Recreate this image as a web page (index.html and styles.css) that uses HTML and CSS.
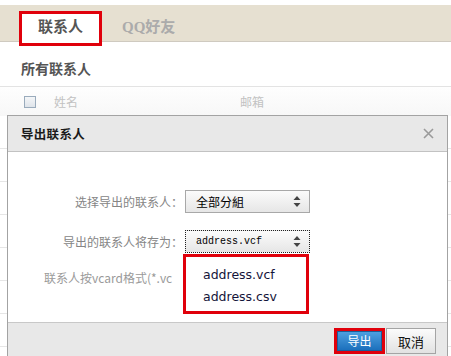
FILE: index.html
```html
<!DOCTYPE html>
<html lang="zh">
<head>
<meta charset="utf-8">
<title>导出联系人</title>
<link rel="stylesheet" href="styles.css">
</head>
<body>
<div class="page">
  <div class="tabbar">
    <div class="tab tab-active">联系人</div>
    <div class="tab tab-other">QQ好友</div>
  </div>
  <div class="list-title">所有联系人</div>
  <div class="thead">
    <span class="checkbox"></span>
    <span class="col-name">姓名</span>
    <span class="col-mail">邮箱</span>
  </div>
  <div class="row"></div>
  <div class="row"></div>
  <div class="row"></div>
  <div class="row"></div>
  <div class="row"></div>
  <div class="row"></div>
  <div class="row"></div>

  <div class="dialog">
    <div class="dialog-head">
      <span class="dialog-title">导出联系人</span>
      <svg class="close" width="11" height="11" viewBox="0 0 11 11"><path d="M1 1L10 10M10 1L1 10" stroke="#9a9a9a" stroke-width="1.6" fill="none"/></svg>
    </div>
    <div class="dialog-body">
      <div class="form">
        <label class="label">选择导出的联系人：</label>
        <div class="select">
          <span>全部分組</span>
          <svg class="arrows" width="8" height="11" viewBox="0 0 8 11"><path d="M4 0L7.5 4H0.5Z M4 11L7.5 7H0.5Z" fill="#444"/></svg>
        </div>
        <label class="label">导出的联系人将存为：</label>
        <div class="select select-focus">
          <span class="mono">address.vcf</span>
          <svg class="arrows" width="8" height="11" viewBox="0 0 8 11"><path d="M4 0L7.5 4H0.5Z M4 11L7.5 7H0.5Z" fill="#444"/></svg>
          <div class="dropdown">
            <div class="option">address.vcf</div>
            <div class="option">address.csv</div>
          </div>
        </div>
        <div class="note">联系人按vcard格式(*.vc</div>
      </div>
    </div>
    <div class="dialog-foot">
      <div class="highlight"><button class="btn btn-primary">导出</button></div>
      <button class="btn btn-default">取消</button>
    </div>
  </div>
</div>
</body>
</html>
```

FILE: styles.css
```css
html, body {
  margin: 0;
  padding: 0;
  overflow: hidden;
}
body {
  font-family: "Noto Sans CJK SC", "DejaVu Sans", sans-serif;
  font-size: 12px;
  color: #333;
  background: #fff;
}
.page {
  position: relative;
  width: 451px;
  height: 356px;
  overflow: hidden;
  padding-top: 5px;
  box-sizing: border-box;
}
.tabbar {
  height: 37px;
  box-sizing: border-box;
  background: #e6e0d1;
  border-bottom: 1px solid #cfcac0;
  display: flex;
  align-items: flex-start;
  padding: 6px 0 0 19px;
}
.tab {
  font-family: "Liberation Serif", "Noto Sans CJK SC", serif;
  font-weight: bold;
  font-size: 15px;
}
.tab-active {
  width: 83px;
  height: 35px;
  box-sizing: border-box;
  border: 3px solid #e0000b;
  background: #fff;
  color: #555;
  text-align: center;
  line-height: 26px;
  position: relative;
  z-index: 1;
}
.tab-other {
  margin-left: 20px;
  color: #ababab;
  line-height: 26px;
  padding-top: 3px;
}
.list-title {
  height: 44px;
  box-sizing: border-box;
  padding: 8px 0 0 21px;
  line-height: 36px;
  font-size: 14px;
  font-weight: bold;
  color: #555;
}
.thead {
  height: 29px;
  border-top: 1px solid #e3e3e3;
  background: linear-gradient(#fefefe, #f7f7f7);
  display: flex;
  align-items: center;
  color: #c2c2c2;
  font-size: 12px;
}
.checkbox {
  width: 12px;
  height: 12px;
  box-sizing: border-box;
  border: 1px solid #9aabbc;
  background: linear-gradient(#f4f6f8, #dfe4ea);
  margin-left: 24px;
}
.col-name {
  margin-left: 18px;
}
.col-mail {
  margin-left: 162px;
}
.row {
  height: 32px;
  border-bottom: 1px solid #e6e6e6;
}
.dialog {
  position: absolute;
  left: 7px;
  top: 115px;
  width: 441px;
  box-sizing: border-box;
  border: 1px solid #a3a3a3;
  background: #fff;
  z-index: 2;
}
.dialog-head {
  height: 35px;
  background: #e8e8e8;
  border-bottom: 1px solid #c2c2c2;
  display: flex;
  align-items: center;
  justify-content: space-between;
  padding: 0 13px 0 13px;
}
.dialog-title {
  font-weight: bold;
  font-size: 12.5px;
  color: #1a1a1a;
  letter-spacing: 0.3px;
}
.dialog-body {
  height: 170px;
  box-sizing: border-box;
  padding-top: 38px;
}
.form {
  display: grid;
  grid-template-columns: 175px 125px;
  column-gap: 2px;
  row-gap: 17px;
  align-items: center;
}
.label {
  text-align: right;
  color: #858585;
  font-size: 12px;
  line-height: 16px;
}
.select {
  position: relative;
  height: 23px;
  box-sizing: border-box;
  border: 1px solid #a8a8a8;
  background: linear-gradient(#fbfbfb, #e6e6e6);
  display: flex;
  align-items: center;
  justify-content: space-between;
  padding: 0 8px 0 10px;
  color: #000;
  font-size: 12px;
}
.select-focus {
  border: 1px dotted #222;
}
.mono {
  font-family: "Liberation Mono", monospace;
  font-size: 10px;
}
.dropdown {
  position: absolute;
  left: -3px;
  top: 23px;
  width: 126px;
  box-sizing: border-box;
  border: 3px solid #e0000b;
  background: #fff;
  padding: 7px 0 3px 17px;
  z-index: 3;
}
.option {
  font-family: "DejaVu Sans", sans-serif;
  font-size: 12.5px;
  line-height: 22px;
  color: #14143a;
}
.note {
  grid-column: 1 / -1;
  padding-left: 36px;
  line-height: 16px;
  color: #9a9a9a;
  font-size: 12px;
  white-space: nowrap;
}
.dialog-foot {
  height: 40px;
  border-top: 1px solid #c8c8c8;
  background: #e8e8e8;
  display: flex;
  justify-content: flex-end;
  align-items: flex-start;
  padding: 5px 11px 0 0;
}
.highlight {
  border: 3px solid #e0000b;
  display: flex;
}
.btn {
  font-family: "Noto Sans CJK SC", sans-serif;
  font-size: 12px;
  margin: 0;
  padding: 0;
  cursor: pointer;
}
.btn-primary {
  width: 45px;
  height: 20px;
  border: 1px solid #1b5d98;
  background: linear-gradient(#4d9fe0, #1c70bc);
  color: #fff;
  line-height: 18px;
}
.btn-default {
  width: 50px;
  height: 26px;
  margin-left: 1px;
  border: 1px solid #a4a4a4;
  background: linear-gradient(#fbfbfb, #e2e2e2);
  color: #111;
  font-size: 13px;
}
```
